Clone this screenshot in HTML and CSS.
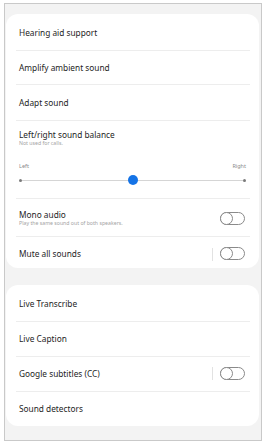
FILE: index.html
```html
<!DOCTYPE html>
<html>
<head>
<meta charset="utf-8">
<link rel="stylesheet" href="styles.css">
</head>
<body>
<div class="frame">
  <div class="card card1">
    <div class="row h36"><span class="title">Hearing aid support</span></div>
    <div class="row h34 sep"><span class="title">Amplify ambient sound</span></div>
    <div class="row h36 sep"><span class="title">Adapt sound</span></div>
    <div class="row balance sep">
      <div class="title">Left/right sound balance</div>
      <div class="sub">Not used for calls.</div>
      <div class="lr"><span>Left</span><span>Right</span></div>
      <div class="slider">
        <span class="dot"></span>
        <span class="track"></span>
        <span class="dot"></span>
        <span class="thumb"></span>
      </div>
    </div>
    <div class="row h38 sep switchrow">
      <div class="texts">
        <div class="title">Mono audio</div>
        <div class="sub">Play the same sound out of both speakers.</div>
      </div>
      <span class="toggle"><span class="knob"></span></span>
    </div>
    <div class="row h30 sep switchrow">
      <div class="texts"><div class="title">Mute all sounds</div></div>
      <span class="vbar"></span>
      <span class="toggle"><span class="knob"></span></span>
    </div>
  </div>
  <div class="card card2">
    <div class="row h36"><span class="title">Live Transcribe</span></div>
    <div class="row h35 sep"><span class="title">Live Caption</span></div>
    <div class="row h35 sep switchrow">
      <div class="texts"><div class="title">Google subtitles (CC)</div></div>
      <span class="vbar"></span>
      <span class="toggle"><span class="knob"></span></span>
    </div>
    <div class="row h35 sep"><span class="title">Sound detectors</span></div>
  </div>
</div>
</body>
</html>
```
FILE: styles.css
```css
html, body {
  margin: 0;
  padding: 0;
  background: #ffffff;
}
body {
  width: 266px;
  height: 446px;
  font-family: "Noto Sans", "Open Sans", sans-serif;
  color: #252525;
}
.frame {
  margin: 3px 0 0 4px;
  width: 258px;
  height: 438px;
  border: 1px solid #c9c9c9;
  background: #f3f3f3;
  padding: 10px 2px 0 1px;
  box-sizing: border-box;
  display: flex;
  flex-direction: column;
  gap: 17px;
}
.card {
  background: #ffffff;
  border-radius: 12px;
  display: flex;
  flex-direction: column;
}
.card1 { height: 254px; }
.card2 { height: 141px; }
.row {
  position: relative;
  display: flex;
  align-items: center;
  padding: 0 13px;
}
.sep::before {
  content: "";
  position: absolute;
  top: 0;
  left: 10px;
  right: 9px;
  height: 1px;
  background: #ededed;
}
.h30 { height: 31px; align-items: flex-start; padding-top: 12px; box-sizing: border-box; }
.h34 { height: 34px; }
.h35 { height: 35px; }
.h36 { height: 36px; }
.h38 { height: 38px; padding-top: 2px; box-sizing: border-box; }
.title {
  font-size: 8.3px;
  line-height: 11px;
  letter-spacing: 0;
}
.sub {
  font-size: 5.2px;
  line-height: 7px;
  color: #a3a3a3;
}
.balance {
  height: 78px;
  flex-direction: column;
  align-items: stretch;
  padding-top: 9px;
  padding-right: 13px;
  box-sizing: border-box;
}
.lr {
  display: flex;
  justify-content: space-between;
  font-size: 5.5px;
  line-height: 7px;
  color: #8a8a8a;
  margin-top: 16px;
}
.slider {
  position: relative;
  display: flex;
  align-items: center;
  margin-top: 4px;
  height: 12px;
}
.track {
  flex: 1;
  height: 1px;
  background: #d5d5d5;
}
.dot {
  width: 3px;
  height: 3px;
  border-radius: 50%;
  background: #7a7a7a;
}
.thumb {
  position: absolute;
  left: 109px;
  top: 1px;
  width: 10px;
  height: 10px;
  border-radius: 50%;
  background: #1473e6;
}
.switchrow .texts { flex: 1; }
.switchrow.h30 .toggle { margin-top: -1px; }
.toggle {
  position: relative;
  width: 23px;
  height: 11px;
  border: 1px solid #8a8a8a;
  border-radius: 7px;
  margin-right: 1px;
  flex: none;
}
.knob {
  position: absolute;
  left: -1px;
  top: -1px;
  width: 11px;
  height: 11px;
  border: 1px solid #8a8a8a;
  border-radius: 50%;
  background: #ffffff;
}
.vbar {
  width: 1px;
  height: 13px;
  background: #e2e2e2;
  margin-right: 7px;
}
```
